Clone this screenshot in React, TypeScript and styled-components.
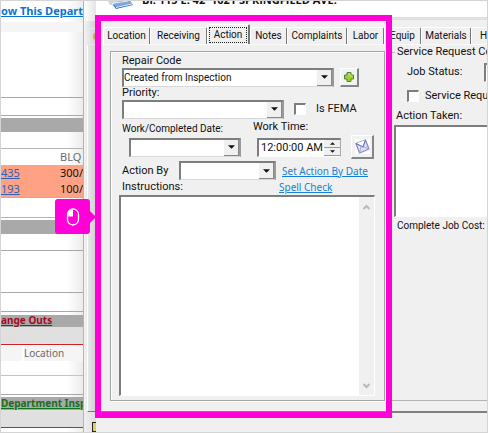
import React from "react";
import styled, { createGlobalStyle } from "styled-components";

const Global = createGlobalStyle`
  * { box-sizing: border-box; }
  body { margin: 0; background: #fff; overflow: hidden; }
  body, button, input, select, textarea { font-family: Roboto, "Liberation Sans", sans-serif; font-size: 11px; color: #111; }
`;

const Screen = styled.main`
  display: flex;
  min-height: 100vh;
  border: 1px solid #d4d4d4;
  overflow: hidden;
  background: #f0f0f0;
`;

/* ---------- page behind the dialog ---------- */

const Backdrop = styled.section`
  flex: 0 0 83px;
  min-width: 0;
  display: flex;
  flex-direction: column;
  overflow: hidden;
  white-space: nowrap;
  background: linear-gradient(to right, #fff 80%, #ececec);
  border-right: 1px solid #b4b4b4;
  font-family: "Noto Sans", sans-serif;
`;

const Row = styled.div<{ $h: number; $bg?: string; $line?: string }>`
  flex: none;
  height: ${(p) => p.$h}px;
  display: flex;
  align-items: center;
  background: ${(p) => p.$bg ?? "transparent"};
  border-bottom: 1px solid ${(p) => p.$line ?? "transparent"};
`;

const SectionLink = styled.a<{ $color: string; $size: number }>`
  color: ${(p) => p.$color};
  font-size: ${(p) => p.$size}px;
  line-height: 14px;
  font-weight: 700;
`;

const Orders = styled.table`
  width: 100%;
  border-collapse: collapse;
  table-layout: fixed;
  font-size: 11px;
  border-bottom: 1px solid #b4b4b4;
  th { height: 16px; padding: 0; font-weight: 400; color: #6b6b6b; text-align: left; line-height: 14px; }
  td { height: 16px; padding: 0; background: #ffa184; line-height: 14px; }
  th:first-child { width: 59px; }
  a { color: #2c62b8; }
`;

const ColumnHead = styled.div`
  flex: none;
  height: 15px;
  display: grid;
  grid-template-columns: 21px 1fr;
  gap: 2px;
  line-height: 15px;
  color: #6b6b6b;
  font-size: 10px;
  span { background: #f5f5f5; }
`;

/* ---------- strip of the parent window ---------- */

const ParentEdge = styled.div`
  flex: 0 0 12px;
  display: flex;
  flex-direction: column;
  background: linear-gradient(to right, #f4f4f4, #cfcfcf);
`;
const EdgeTitle = styled.div`height: 20px; background: linear-gradient(to right, #fff, #e4e4e4);`;
const EdgeTab = styled.div`
  margin: 7px 0 0 5px;
  height: 17px;
  border: 1px solid #e8e8e8;
  border-right: 0;
  display: flex;
  justify-content: flex-end;
`;
const EdgeMark = styled.span`
  width: 3px;
  height: 7px;
  margin-top: 4px;
  border-radius: 3px 0 0 3px;
  background: #d9a04a;
`;
const EdgeBody = styled.div`
  flex: 1;
  margin-left: 3px;
  border-left: 1px solid #fff;
  border-bottom: 1px solid #777;
`;
const EdgeFoot = styled.div`
  height: 20px;
  display: flex;
  align-items: flex-end;
  justify-content: flex-end;
  background: linear-gradient(to right, #f0f0f0, #ddd);
`;
const EdgeIcon = styled.div`
  width: 4px;
  height: 10px;
  border: 1px solid #222;
  border-right: 0;
  background: #d6d94a;
`;

/* ---------- dialog ---------- */

const Dialog = styled.section`
  position: relative;
  flex: 1;
  min-width: 0;
  display: flex;
  flex-direction: column;
  background: #f0f0f0;
`;

const TitleBar = styled.header`
  flex: none;
  height: 19px;
  display: flex;
  gap: 8px;
  padding-left: 12px;
  overflow: hidden;
  background: #fff;
  border-bottom: 3px solid #e0e0e0;
`;
const Title = styled.h1`
  margin: -8px 0 0;
  font: 700 11px/14px "Open Sans", sans-serif;
  white-space: pre;
`;

const Tabs = styled.div`
  flex: none;
  height: 25px;
  display: flex;
  align-items: flex-end;
  padding-left: 7px;
  border-bottom: 1px solid #fafafa;
  overflow: hidden;
`;
const Tab = styled.button<{ $w: number; $active?: boolean }>`
  flex: none;
  width: ${(p) => p.$w}px;
  height: ${(p) => (p.$active ? 20 : 17)}px;
  padding: 0;
  background: #f0f0f0;
  border: 1px solid #fff;
  border-bottom: 0;
  border-right: ${(p) => (p.$active ? 2 : 1)}px solid #777;
  border-radius: 2px 2px 0 0;
  font-size: 10px;
  line-height: 15px;
  white-space: nowrap;
  span {
    display: block;
    margin: 0 1px;
    height: 16px;
    outline: ${(p) => (p.$active ? "1px dotted #222" : "none")};
    outline-offset: -1px;
  }
`;

const Panels = styled.div`
  flex: 1;
  min-width: 0;
  display: flex;
  gap: 6px;
  padding: 6px 0 10px 14px;
  border-bottom: 2px solid #808080;
`;

const Group = styled.form`
  flex: 0 0 275px;
  min-width: 0;
  display: flex;
  flex-direction: column;
  padding: 3px 9px 4px 8px;
  border: 1px solid #a4a4a4;
  box-shadow: inset 1px 1px #fff, 1px 1px #fff;
`;

const Line = styled.div<{ $h: number; $indent?: number; $gap?: number }>`
  flex: none;
  display: flex;
  align-items: center;
  height: ${(p) => p.$h}px;
  padding-left: ${(p) => p.$indent ?? 3}px;
  gap: ${(p) => p.$gap ?? 0}px;
`;

const Cluster = styled.div`
  display: flex;
  align-items: center;
  gap: 10px;
`;

const Label = styled.label<{ $w?: number; $small?: boolean; $align?: string }>`
  flex: none;
  width: ${(p) => (p.$w ? `${p.$w}px` : "auto")};
  align-self: ${(p) => p.$align ?? "auto"};
  font-size: ${(p) => (p.$small ? 10 : 11)}px;
  line-height: 12px;
  white-space: nowrap;
`;

const sunken = `
  background: #fff;
  border: 1px solid #fff;
  border-top: 2px solid #7d7d7d;
  border-left: 2px solid #7d7d7d;
`;

const Combo = styled.div<{ $w: number }>`
  ${sunken}
  flex: none;
  display: grid;
  grid-template-columns: 1fr 15px;
  width: ${(p) => p.$w}px;
  height: 19px;
  border-right: 2px solid #9a9a9a;
  border-bottom: 1px solid #d8d8d8;
`;
const ComboSelect = styled.select`
  grid-area: 1 / 1 / 2 / 3;
  min-width: 0;
  padding: 0 16px 0 0;
  border: 0;
  background: transparent;
  appearance: none;
  font-size: 10px;
  line-height: 14px;
`;
const ComboArrow = styled.span`
  grid-area: 1 / 2;
  pointer-events: none;
  display: flex;
  align-items: center;
  justify-content: center;
  background: #f0f0f0;
  border-right: 1px solid #888;
  border-bottom: 1px solid #888;
`;

const IconButton = styled.button<{ $w: number; $h: number }>`
  flex: none;
  width: ${(p) => p.$w}px;
  height: ${(p) => p.$h}px;
  padding: 0;
  display: flex;
  align-items: center;
  justify-content: center;
  background: #f2f2f2;
  border: 1px solid #fff;
  border-right: 2px solid #858585;
  border-bottom: 2px solid #858585;
`;

const Check = styled.input`
  ${sunken}
  appearance: none;
  flex: none;
  width: 12px;
  height: 12px;
  margin: 0;
`;

const Time = styled.div`
  ${sunken}
  flex: none;
  display: flex;
  width: 84px;
  height: 19px;
  border-right-color: #aaa;
`;
const TimeInput = styled.input`
  flex: 1;
  min-width: 0;
  border: 0;
  padding: 0 0 0 2px;
  background: transparent;
`;
const Spinner = styled.div`
  width: 16px;
  display: flex;
  flex-direction: column;
  background: #f0f0f0;
  button {
    flex: 1;
    min-height: 0;
    padding: 0;
    border: 0;
    border-bottom: 1px solid #999;
    background: none;
    display: flex;
    align-items: center;
    justify-content: center;
  }
`;

const ActionLink = styled.a`
  color: #1480dc;
  font: 10px/14px "Noto Sans", sans-serif;
  white-space: nowrap;
`;

const Memo = styled.div`
  ${sunken}
  flex: 1;
  display: flex;
  margin-top: 3px;
  min-height: 100px;
`;
const MemoText = styled.textarea`
  flex: 1;
  min-width: 0;
  border: 0;
  padding: 2px;
  resize: none;
  background: transparent;
`;
const ScrollTrack = styled.div`
  flex: 0 0 15px;
  padding: 7px 0 6px;
  display: flex;
  flex-direction: column;
  align-items: center;
  justify-content: space-between;
  background: #f0f0f0;
`;

const Service = styled.section`
  flex: 1;
  min-width: 0;
  margin-top: -6px;
  border-bottom: 1px solid #b4b4b4;
  display: flex;
  flex-direction: column;
  overflow: hidden;
  white-space: nowrap;
`;
const ServiceTitle = styled.div`
  display: flex;
  align-items: center;
  gap: 2px;
  height: 14px;
  line-height: 14px;
  &::before { content: ""; flex: 0 0 4px; border-top: 1px solid #b4b4b4; }
`;
const StatusInput = styled.input`
  ${sunken}
  flex: none;
  width: 100px;
  height: 19px;
`;
const Taken = styled.textarea`
  ${sunken}
  flex: none;
  height: 92px;
  width: 140px;
  margin: 0 0 2px 3px;
  padding: 2px;
  resize: none;
`;

/* ---------- annotation ---------- */

const Highlight = styled.div`
  position: absolute;
  left: -1px;
  top: 14px;
  width: 297px;
  bottom: 14px;
  border: 6px solid #ff00d8;
  pointer-events: none;
`;
const Callout = styled.div`
  position: absolute;
  left: -41px;
  top: 198px;
  width: 35px;
  height: 35px;
  border-radius: 3px;
  background: #ff00d8;
  display: flex;
  align-items: center;
  justify-content: center;
  &::after {
    content: "";
    position: absolute;
    left: 35px;
    border: 6px solid transparent;
    border-left-color: #ff00d8;
    border-right: 0;
  }
`;

const Arrow = ({ up = false, w = 7 }: { up?: boolean; w?: number }) => (
  <svg width={w} height={(w + 1) / 2} viewBox="0 0 8 4" aria-hidden="true">
    <path d={up ? "M0 4L4 0L8 4Z" : "M0 0H8L4 4Z"} fill="#111" />
  </svg>
);

const Chevron = ({ up = false }: { up?: boolean }) => (
  <svg width="7" height="6" viewBox="0 0 7 6" aria-hidden="true">
    <path d={up ? "M.5 5L3.5 2L6.5 5" : "M.5 1L3.5 4L6.5 1"} fill="none" stroke="#b9b9b9" strokeWidth="2" />
  </svg>
);

const Plus = () => (
  <svg width="12" height="12" viewBox="0 0 12 12" aria-hidden="true">
    <path d="M4 1.5H8V4H10.5V8H8V10.5H4V8H1.5V4H4Z" fill="#9bcf2c" stroke="#54803f" strokeWidth="1" />
    <path d="M5 3H7V5H9.5" fill="none" stroke="#cbe873" />
  </svg>
);

const Note = () => (
  <svg width="17" height="17" viewBox="0 0 17 17" aria-hidden="true">
    <rect x="1" y="1" width="15" height="15" fill="#fff" />
    <path d="M2 5.5L11.5 2L15 11L5.5 15Z" fill="#dfe3f6" stroke="#8087c0" strokeWidth="1.2" />
    <path d="M2 5.5L9 9L11.5 2" fill="#fff" stroke="#6871b2" strokeWidth="1.2" />
    <path d="M5.5 15L7 8.5M15 11L9.5 8.5" fill="none" stroke="#a2a8d6" />
  </svg>
);

const Papers = () => (
  <svg width="26" height="9" viewBox="0 0 26 9" aria-hidden="true">
    <path d="M2 0L8 8L25 4L22 0Z" fill="#3c6ab0" />
    <path d="M0 0L2 4L19 3L17 0Z" fill="#c8d6e8" />
    <path d="M5 3L8 6L24 3L22 0L12 0Z" fill="#79a7df" />
    <path d="M4 2.5L20 0M8 6.5L24 3" fill="none" stroke="#e4eefb" />
  </svg>
);

const Mouse = () => (
  <svg width="14" height="18" viewBox="0 0 14 18" aria-hidden="true">
    <rect x="1.5" y="1" width="11" height="16" rx="5.5" fill="none" stroke="#fff" strokeWidth="1.3" />
    <path d="M7 1V8.5H1.5V6.5A5.5 5.5 0 0 1 7 1Z" fill="#fff" />
  </svg>
);

function ComboBox({ id, width, value = "" }: { id: string; width: number; value?: string }) {
  return (
    <Combo $w={width}>
      <ComboSelect id={id} defaultValue={value}>
        <option value={value}>{value}</option>
      </ComboSelect>
      <ComboArrow><Arrow /></ComboArrow>
    </Combo>
  );
}

const tabs: [string, number][] = [
  ["Location", 47], ["Receiving", 57], ["Action", 43], ["Notes", 37],
  ["Complaints", 60], ["Labor", 37], ["Equip", 37], ["Materials", 50], ["History", 50],
];

export default function App() {
  return (
    <>
      <Global />
      <Screen>
        <Backdrop>
          <Row $h={21}><SectionLink href="#" $color="#0b74d1" $size={11}>ow This Department</SectionLink></Row>
          <Row $h={10} $bg="#f5f5f5" />
          <Row $h={66} $line="#a8a8a8" />
          <Row $h={18} $line="#a8a8a8" />
          <Row $h={2} />
          <Row $h={14} $bg="#a9a9a9" />
          <Row $h={17} $line="#b4b4b4" />
          <Orders>
            <thead><tr><th /><th>BLQ</th></tr></thead>
            <tbody>
              <tr><td><a href="#">435</a></td><td>300/1</td></tr>
              <tr><td><a href="#">193</a></td><td>100/3</td></tr>
            </tbody>
          </Orders>
          <Row $h={20} $line="#b4b4b4" />
          <Row $h={2} />
          <Row $h={14} $bg="#a9a9a9" />
          <Row $h={17} $line="#a8a8a8" />
          <Row $h={42} $line="#a8a8a8" />
          <Row $h={19} $line="#a8a8a8" />
          <Row $h={3} />
          <Row $h={12} $bg="#a9a9a9"><SectionLink href="#" $color="#a30d1c" $size={10}>ange Outs</SectionLink></Row>
          <Row $h={18} $bg="#e0e0e0" $line="#cf2027" />
          <Row $h={1} />
          <ColumnHead><span /><span>Location</span></ColumnHead>
          <Row $h={15} $line="#c4c4c4" />
          <Row $h={19} $line="#a8a8a8" />
          <Row $h={2} />
          <Row $h={13} $bg="#a9a9a9"><SectionLink href="#" $color="#14701c" $size={10}>Department Inspections</SectionLink></Row>
          <Row $h={18} $bg="#e0e0e0" $line="#cf2027" />
        </Backdrop>

        <ParentEdge>
          <EdgeTitle />
          <EdgeTab><EdgeMark /></EdgeTab>
          <EdgeBody />
          <EdgeFoot><EdgeIcon /></EdgeFoot>
        </ParentEdge>

        <Dialog>
          <TitleBar>
            <Papers />
            <Title>Bl. 115 E. 42  1021 SPRINGFIELD AVE.</Title>
          </TitleBar>
          <Tabs role="tablist">
            {tabs.map(([name, w]) => (
              <Tab key={name} role="tab" aria-selected={name === "Action"} $w={w} $active={name === "Action"}>
                <span>{name}</span>
              </Tab>
            ))}
          </Tabs>
          <Panels>
            <Group onSubmit={(e) => e.preventDefault()}>
              <Line $h={12}><Label htmlFor="repair">Repair Code</Label></Line>
              <Line $h={20} $gap={6}>
                <ComboBox id="repair" width={212} value="Created from Inspection" />
                <IconButton type="button" $w={19} $h={19} aria-label="Add repair code"><Plus /></IconButton>
              </Line>
              <Line $h={12}><Label htmlFor="priority">Priority:</Label></Line>
              <Line $h={20} $gap={10}>
                <ComboBox id="priority" width={162} />
                <Check type="checkbox" id="fema" />
                <Label htmlFor="fema">Is FEMA</Label>
              </Line>
              <Line $h={16}>
                <Label htmlFor="date" $w={131} $small $align="flex-end">Work/Completed Date:</Label>
                <Label htmlFor="time">Work Time:</Label>
              </Line>
              <Line $h={24} $indent={10} $gap={16}>
                <ComboBox id="date" width={112} />
                <Cluster>
                  <Time>
                    <TimeInput id="time" defaultValue="12:00:00 AM" />
                    <Spinner>
                      <button type="button" aria-label="Later"><Arrow up w={5} /></button>
                      <button type="button" aria-label="Earlier"><Arrow w={5} /></button>
                    </Spinner>
                  </Time>
                  <IconButton type="button" $w={23} $h={24} aria-label="Send note"><Note /></IconButton>
                </Cluster>
              </Line>
              <Line $h={23}>
                <Label htmlFor="by" $w={57}>Action By</Label>
                <Cluster>
                  <ComboBox id="by" width={97} />
                </Cluster>
                <Line $h={14} $indent={6}><ActionLink href="#">Set Action By Date</ActionLink></Line>
              </Line>
              <Line $h={10}>
                <Label htmlFor="notes" $w={157}>Instructions:</Label>
                <ActionLink href="#">Spell Check</ActionLink>
              </Line>
              <Memo>
                <MemoText id="notes" />
                <ScrollTrack><Chevron up /><Chevron /></ScrollTrack>
              </Memo>
            </Group>

            <Service>
              <ServiceTitle>Service Request Completion</ServiceTitle>
              <Line $h={26} $indent={16}>
                <Label htmlFor="status" $w={77}>Job Status:</Label>
                <StatusInput id="status" />
              </Line>
              <Line $h={22} $indent={16} $gap={6}>
                <Check type="checkbox" id="request" />
                <Label htmlFor="request">Service Request</Label>
              </Line>
              <Line $h={18} $indent={5}><Label htmlFor="taken">Action Taken:</Label></Line>
              <Taken id="taken" />
              <Line $h={14} $indent={6}><Label $small>Complete Job Cost:</Label></Line>
            </Service>
          </Panels>
          <Row $h={19} />
          <Highlight />
          <Callout><Mouse /></Callout>
        </Dialog>
      </Screen>
    </>
  );
}
